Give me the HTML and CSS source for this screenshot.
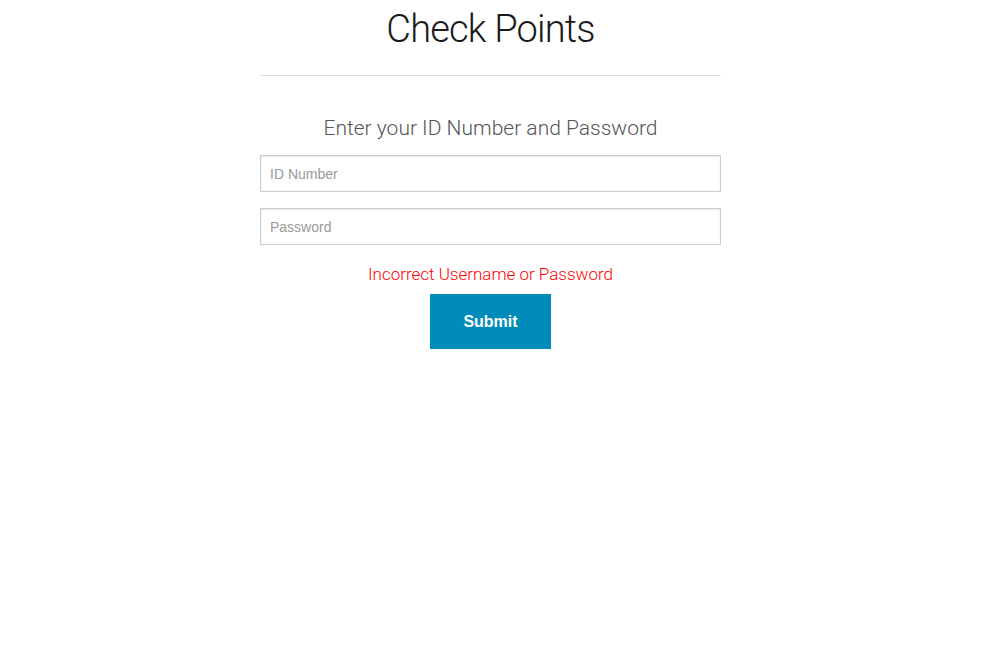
FILE: index.html
```html
<!DOCTYPE html>
<html>
<head>
<meta charset="utf-8">
<link rel="stylesheet" href="styles.css">
</head>
<body>
<div class="wrap">
  <h1 class="title">Check Points</h1>
  <hr class="rule">
  <form class="login">
    <h2 class="prompt">Enter your ID Number and Password</h2>
    <input class="field" type="text" placeholder="ID Number">
    <input class="field" type="password" placeholder="Password">
    <p class="error">Incorrect Username or Password</p>
    <div class="actions"><button class="submit" type="button">Submit</button></div>
  </form>
</div>
</body>
</html>
```
FILE: styles.css
```css
html, body { margin: 0; padding: 0; background: #fff; }
body { font-family: "Liberation Sans", Arial, sans-serif; color: #222; }
.wrap { width: 461px; margin: 0 auto; }
.title {
  margin: 5px 0 0;
  font-family: Roboto, "Liberation Sans", sans-serif;
  font-weight: 300;
  font-size: 38px;
  letter-spacing: -0.8px;
  line-height: 48px;
  text-align: center;
  color: #1a1a1a;
}
.rule { margin: 22px 0 0; border: 0; border-top: 1px solid #ddd; height: 0; }
.login { display: flex; flex-direction: column; }
.prompt {
  margin: 39px 0 14px;
  font-family: Roboto, "Liberation Sans", sans-serif;
  font-weight: 300;
  font-size: 21px;
  line-height: 26px;
  text-align: center;
  color: #555;
}
.field {
  box-sizing: border-box;
  height: 37px;
  margin: 0 0 16px;
  padding: 0 9px;
  border: 1px solid #ccc;
  box-shadow: inset 0 1px 2px rgba(0,0,0,0.1);
  font-family: "Liberation Sans", Arial, sans-serif;
  font-size: 14px;
  color: #333;
  outline: none;
}
.field::placeholder { color: #999; }
.error {
  margin: 2px 0 9px;
  font-family: Roboto, "Liberation Sans", sans-serif;
  font-weight: 300;
  font-size: 17px;
  line-height: 22px;
  text-align: center;
  color: #f00;
}
.actions { display: flex; justify-content: center; }
.submit {
  box-sizing: border-box;
  width: 121px;
  height: 55px;
  border: 0;
  background: #008cba;
  color: #fff;
  font-family: "Liberation Sans", Arial, sans-serif;
  font-weight: bold;
  font-size: 16px;
  padding: 0;
}
```
